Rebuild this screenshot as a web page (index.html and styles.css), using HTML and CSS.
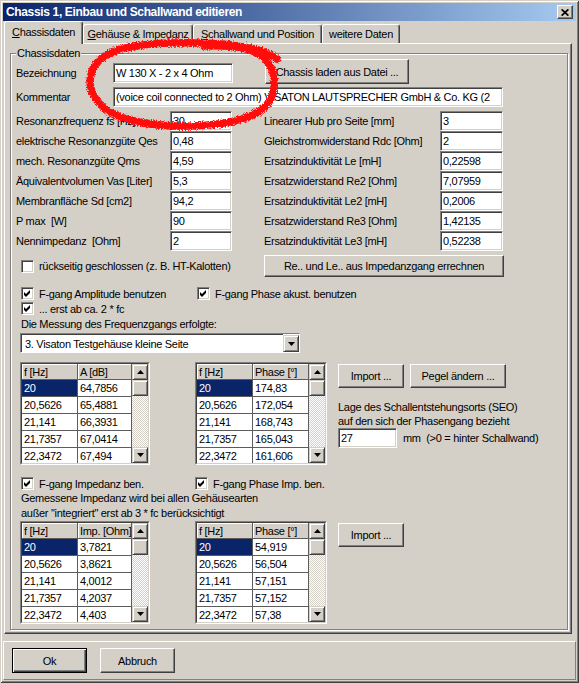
FILE: index.html
```html
<!DOCTYPE html>
<html lang="de">
<head>
<meta charset="utf-8">
<title>Chassis 1, Einbau und Schallwand editieren</title>
<link rel="stylesheet" href="styles.css">
</head>
<body>
<div class="window">
  <div class="titlebar">
    <span class="title">Chassis 1, Einbau und Schallwand editieren</span>
    <div class="close"><svg width="8" height="7" viewBox="0 0 8 7"><path d="M0.6 0.4 L7.4 6.6 M7.4 0.4 L0.6 6.6" stroke="#000" stroke-width="1.8" fill="none"/></svg></div>
  </div>
  <div class="tabs">
    <div class="tab tab-1 active"><u>C</u>hassisdaten</div>
    <div class="tab tab-2"><u>G</u>ehäuse &amp; Impedanz</div>
    <div class="tab tab-3"><u>S</u>challwand und Position</div>
    <div class="tab tab-4">weitere Daten</div>
  </div>
  <div class="page">
    <div class="group">
      <span class="legend">Chassisdaten</span>

      <div class="row row-name">
        <span class="lbl-w">Bezeichnung</span>
        <div class="edit edit-name">W 130 X - 2 x 4 Ohm</div>
        <div class="btn btn-load">Chassis laden aus Datei ...</div>
      </div>
      <div class="row row-comment">
        <span class="lbl-w">Kommentar</span>
        <div class="edit edit-comment">(voice coil connected to 2 Ohm) VISATON LAUTSPRECHER GmbH &amp; Co. KG (2</div>
      </div>

      <div class="params">
        <span>Resonanzfrequenz fs [Hz]</span><div class="edit">30</div><span class="lbl-r">Linearer Hub pro Seite [mm]</span><div class="edit">3</div>
        <span>elektrische Resonanzgüte Qes</span><div class="edit">0,48</div><span class="lbl-r">Gleichstromwiderstand Rdc [Ohm]</span><div class="edit">2</div>
        <span>mech. Resonanzgüte Qms</span><div class="edit">4,59</div><span class="lbl-r">Ersatzinduktivität Le [mH]</span><div class="edit">0,22598</div>
        <span>Äquivalentvolumen Vas [Liter]</span><div class="edit">5,3</div><span class="lbl-r">Ersatzwiderstand Re2 [Ohm]</span><div class="edit">7,07959</div>
        <span>Membranfläche Sd [cm2]</span><div class="edit">94,2</div><span class="lbl-r">Ersatzinduktivität Le2 [mH]</span><div class="edit">0,2006</div>
        <span>P max &nbsp;[W]</span><div class="edit">90</div><span class="lbl-r">Ersatzwiderstand Re3 [Ohm]</span><div class="edit">1,42135</div>
        <span>Nennimpedanz &nbsp;[Ohm]</span><div class="edit">2</div><span class="lbl-r">Ersatzinduktivität Le3 [mH]</span><div class="edit">0,52238</div>
      </div>

      <div class="row row-back">
        <div class="check-item check-back"><span class="chk"></span><span>rückseitig geschlossen (z. B. HT-Kalotten)</span></div>
        <div class="btn btn-calc">Re.. und Le.. aus Impedanzgang errechnen</div>
      </div>

      <div class="row row-chk row-fgang">
        <div class="check-item check-a"><span class="chk"><svg width="7" height="7" viewBox="0 0 7 7"><path d="M0 2 L2 4 L6 0 L6 3 L2 7 L0 5 Z" fill="#000"/></svg></span><span>F-gang Amplitude benutzen</span></div>
        <div class="check-item"><span class="chk"><svg width="7" height="7" viewBox="0 0 7 7"><path d="M0 2 L2 4 L6 0 L6 3 L2 7 L0 5 Z" fill="#000"/></svg></span><span>F-gang Phase akust. benutzen</span></div>
      </div>
      <div class="row row-chk">
        <div class="check-item"><span class="chk"><svg width="7" height="7" viewBox="0 0 7 7"><path d="M0 2 L2 4 L6 0 L6 3 L2 7 L0 5 Z" fill="#000"/></svg></span><span>... erst ab ca. 2 * fc</span></div>
      </div>
      <div class="note note-mess">Die Messung des Frequenzgangs erfolgte:</div>
      <div class="combo">
        <span class="combo-text">3. Visaton Testgehäuse kleine Seite</span>
        <span class="combo-btn"><svg width="7" height="4" viewBox="0 0 7 4"><path d="M0 0 H7 L3.5 4 Z" fill="#000"/></svg></span>
      </div>

      <div class="tables">
        <div class="grid">
          <div class="grid-in">
            <div class="cells">
              <span class="hd">f [Hz]</span><span class="hd">A [dB]</span>
              <span class="sel">20</span><span>64,7856</span>
              <span>20,5626</span><span>65,4881</span>
              <span>21,141</span><span>66,3931</span>
              <span>21,7357</span><span>67,0414</span>
              <span>22,3472</span><span>67,494</span>
            </div>
            <div class="vscroll">
              <span class="sb-btn"><svg width="7" height="4" viewBox="0 0 7 4"><path d="M0 4 H7 L3.5 0 Z" fill="#000"/></svg></span>
              <span class="sb-thumb"></span>
              <span class="sb-track"></span>
              <span class="sb-btn"><svg width="7" height="4" viewBox="0 0 7 4"><path d="M0 0 H7 L3.5 4 Z" fill="#000"/></svg></span>
            </div>
          </div>
        </div>
        <div class="grid grid-b">
          <div class="grid-in">
            <div class="cells cells-b">
              <span class="hd">f [Hz]</span><span class="hd">Phase [°]</span>
              <span class="sel">20</span><span>174,83</span>
              <span>20,5626</span><span>172,054</span>
              <span>21,141</span><span>168,743</span>
              <span>21,7357</span><span>165,043</span>
              <span>22,3472</span><span>161,606</span>
            </div>
            <div class="vscroll">
              <span class="sb-btn"><svg width="7" height="4" viewBox="0 0 7 4"><path d="M0 4 H7 L3.5 0 Z" fill="#000"/></svg></span>
              <span class="sb-thumb"></span>
              <span class="sb-track"></span>
              <span class="sb-btn"><svg width="7" height="4" viewBox="0 0 7 4"><path d="M0 0 H7 L3.5 4 Z" fill="#000"/></svg></span>
            </div>
          </div>
        </div>
        <div class="side">
          <div class="btnrow">
            <div class="btn btn-import">Import ...</div>
            <div class="btn btn-pegel">Pegel ändern ...</div>
          </div>
          <p class="seo">Lage des Schallentstehungsorts (SEO)<br>auf den sich der Phasengang bezieht</p>
          <div class="seo-row">
            <div class="edit edit-seo">27</div>
            <span>mm &nbsp;(&gt;0 = hinter Schallwand)</span>
          </div>
        </div>
      </div>

      <div class="row row-chk row-imp">
        <div class="check-item check-i"><span class="chk"><svg width="7" height="7" viewBox="0 0 7 7"><path d="M0 2 L2 4 L6 0 L6 3 L2 7 L0 5 Z" fill="#000"/></svg></span><span>F-gang Impedanz ben.</span></div>
        <div class="check-item"><span class="chk"><svg width="7" height="7" viewBox="0 0 7 7"><path d="M0 2 L2 4 L6 0 L6 3 L2 7 L0 5 Z" fill="#000"/></svg></span><span>F-gang Phase Imp. ben.</span></div>
      </div>
      <p class="note note-imp">Gemessene Impedanz wird bei allen Gehäusearten<br>außer "integriert" erst ab 3 * fc berücksichtigt</p>

      <div class="tables tables-imp">
        <div class="grid">
          <div class="grid-in">
            <div class="cells">
              <span class="hd">f [Hz]</span><span class="hd">Imp. [Ohm]</span>
              <span class="sel">20</span><span>3,7821</span>
              <span>20,5626</span><span>3,8621</span>
              <span>21,141</span><span>4,0012</span>
              <span>21,7357</span><span>4,2037</span>
              <span>22,3472</span><span>4,403</span>
            </div>
            <div class="vscroll">
              <span class="sb-btn"><svg width="7" height="4" viewBox="0 0 7 4"><path d="M0 4 H7 L3.5 0 Z" fill="#000"/></svg></span>
              <span class="sb-thumb"></span>
              <span class="sb-track"></span>
              <span class="sb-btn"><svg width="7" height="4" viewBox="0 0 7 4"><path d="M0 0 H7 L3.5 4 Z" fill="#000"/></svg></span>
            </div>
          </div>
        </div>
        <div class="grid grid-b">
          <div class="grid-in">
            <div class="cells cells-b">
              <span class="hd">f [Hz]</span><span class="hd">Phase [°]</span>
              <span class="sel">20</span><span>54,919</span>
              <span>20,5626</span><span>56,504</span>
              <span>21,141</span><span>57,151</span>
              <span>21,7357</span><span>57,152</span>
              <span>22,3472</span><span>57,38</span>
            </div>
            <div class="vscroll">
              <span class="sb-btn"><svg width="7" height="4" viewBox="0 0 7 4"><path d="M0 4 H7 L3.5 0 Z" fill="#000"/></svg></span>
              <span class="sb-thumb"></span>
              <span class="sb-track"></span>
              <span class="sb-btn"><svg width="7" height="4" viewBox="0 0 7 4"><path d="M0 0 H7 L3.5 4 Z" fill="#000"/></svg></span>
            </div>
          </div>
        </div>
        <div class="side">
          <div class="btnrow">
            <div class="btn btn-import">Import ...</div>
          </div>
        </div>
      </div>
    </div>
  </div>
  <div class="footer">
    <div class="btn btn-foot btn-default">Ok</div>
    <div class="btn btn-foot">Abbruch</div>
  </div>

  <svg class="scribble" width="579" height="683" viewBox="0 0 579 683">
    <defs>
      <filter id="spray" x="-5%" y="-5%" width="110%" height="110%">
        <feTurbulence type="fractalNoise" baseFrequency="0.8" numOctaves="2" seed="3" result="n"/>
        <feDisplacementMap in="SourceGraphic" in2="n" scale="5" xChannelSelector="R" yChannelSelector="G"/>
      </filter>
    </defs>
    <path d="M277 59 C262 47 222 42 172 43 C126 44 99 52 92 71 C85 91 98 113 134 121 C174 130 234 127 258 112 C279 99 279 71 263 57 C251 47 226 45 204 46" fill="none" stroke="#ff0a0a" stroke-width="7.5" stroke-linecap="round" filter="url(#spray)"/>
  </svg>
</div>
</body>
</html>
```
FILE: styles.css
```css
* { box-sizing: border-box; }
html, body { margin: 0; padding: 0; }
body {
  font-family: "Liberation Sans", Arial, sans-serif;
  font-size: 11px;
  letter-spacing: -0.3px;
  color: #000;
  background: #d4d0c8;
}
p { margin: 0; }

.window {
  position: relative;
  width: 579px;
  height: 683px;
  padding: 3px;
  background: #d4d0c8;
  display: flex;
  flex-direction: column;
  box-shadow: inset 1px 1px 0 #d4d0c8, inset -1px -1px 0 #404040, inset 2px 2px 0 #fff, inset -2px -2px 0 #808080;
}

/* title bar */
.titlebar {
  height: 18px;
  flex: none;
  display: flex;
  align-items: center;
  justify-content: space-between;
  padding: 0 3px 0 3px;
  background: linear-gradient(to right, #0a246a, #a6caf0);
  color: #fff;
}
.title { font-weight: bold; font-size: 12px; letter-spacing: -0.35px; }
.close {
  width: 16px;
  height: 14px;
  background: #d4d0c8;
  border: 1px solid;
  border-color: #fff #404040 #404040 #fff;
  box-shadow: inset -1px -1px 0 #808080;
  display: flex;
  align-items: center;
  justify-content: center;
}

/* tabs */
.tabs {
  height: 22px;
  flex: none;
  display: flex;
  align-items: flex-end;
  padding-left: 1px;
}
.tab {
  height: 19px;
  border-top: 1px solid #fff;
  border-left: 1px solid #fff;
  border-right: 1px solid #404040;
  box-shadow: inset -1px 0 0 #808080;
  border-radius: 3px 3px 0 0;
  display: flex;
  align-items: center;
  justify-content: center;
  white-space: nowrap;
}
.tab.active {
  height: 23px;
  margin-bottom: -1px;
  position: relative;
  z-index: 1;
  background: #d4d0c8;
  padding-bottom: 2px;
}
.tab-1 { width: 79px; }
.tab-2 { width: 110px; }
.tab-3 { width: 129px; }
.tab-4 { width: 78px; }

/* page */
.page {
  height: 591px;
  width: 568px;
  margin-left: 1px;
  flex: none;
  border-top: 1px solid #fff;
  border-left: 1px solid #fff;
  border-right: 1px solid #404040;
  border-bottom: 1px solid #404040;
  box-shadow: inset -1px -1px 0 #808080;
}
.group {
  position: relative;
  margin: 9px 0 0 5px;
  width: 558px;
  height: 577px;
  padding-left: 5px;
  border: 1px solid #808080;
  box-shadow: inset 1px 1px 0 #fff, 1px 1px 0 #fff;
}
.legend {
  position: absolute;
  top: -7px;
  left: 5px;
  padding: 0 1px;
  line-height: 13px;
  background: #d4d0c8;
}

/* controls */
.edit {
  height: 20px;
  background: #fff;
  border: 1px solid;
  border-color: #808080 #fff #fff #808080;
  box-shadow: inset 1px 1px 0 #404040, inset -1px -1px 0 #d4d0c8;
  padding-left: 2px;
  display: flex;
  align-items: center;
  white-space: nowrap;
  overflow: hidden;
}
.btn {
  background: #d4d0c8;
  border: 1px solid;
  border-color: #fff #404040 #404040 #fff;
  box-shadow: inset -1px -1px 0 #808080;
  display: flex;
  align-items: center;
  justify-content: center;
  white-space: nowrap;
}
.btn-default {
  border: 1px solid #000;
  box-shadow: inset 1px 1px 0 #fff, inset -1px -1px 0 #404040, inset -2px -2px 0 #808080;
}
.chk {
  width: 13px;
  height: 13px;
  flex: none;
  background: #fff;
  border: 1px solid;
  border-color: #808080 #fff #fff #808080;
  box-shadow: inset 1px 1px 0 #404040, inset -1px -1px 0 #d4d0c8;
  display: flex;
  align-items: center;
  justify-content: center;
}
.check-item {
  display: flex;
  align-items: center;
  gap: 5px;
  white-space: nowrap;
}

/* rows */
.row { display: flex; align-items: center; }
.lbl-w { width: 97px; flex: none; }
.row-name { margin-top: 9px; height: 20px; align-items: flex-start; }
.row-name .lbl-w { line-height: 20px; }
.edit-name { width: 120px; }
.btn-load { width: 144px; height: 25px; margin: -4px 0 0 32px; }
.row-comment { margin-top: 4px; height: 20px; }
.edit-comment { width: 390px; }

.params {
  margin-top: 4px;
  display: grid;
  grid-template-columns: 154px 62px 208px 63px;
  grid-auto-rows: 20px;
  align-items: center;
  white-space: nowrap;
}
.lbl-r { padding-left: 32px; }

.row-back { margin-top: 4px; height: 22px; }
.check-back { width: 248px; padding-left: 5px; }
.btn-calc { width: 240px; height: 22px; }

.row-chk { height: 15px; padding-left: 5px; }
.row-fgang { margin-top: 9px; }
.check-a { width: 176px; }
.note { margin-left: 5px; white-space: nowrap; }
.note-mess { margin-top: 1px; height: 15px; line-height: 15px; }

.combo {
  margin: 1px 0 0 4px;
  width: 280px;
  height: 20px;
  background: #fff;
  border: 1px solid;
  border-color: #808080 #fff #fff #808080;
  display: flex;
}
.combo-text {
  flex: 1;
  border-top: 1px solid #404040;
  border-left: 1px solid #404040;
  padding-left: 3px;
  display: flex;
  align-items: center;
}
.combo-btn {
  width: 16px;
  height: 17px;
  margin-top: 1px;
  background: #d4d0c8;
  border: 1px solid;
  border-color: #d4d0c8 #404040 #404040 #d4d0c8;
  box-shadow: inset 1px 1px 0 #fff, inset -1px -1px 0 #808080;
  display: flex;
  align-items: center;
  justify-content: center;
}

/* tables */
.tables {
  margin: 9px 0 0 4px;
  height: 103px;
  display: flex;
  align-items: flex-start;
}
.tables-imp { margin-top: 0; }
.grid {
  width: 130px;
  height: 103px;
  flex: none;
  border: 1px solid;
  border-color: #808080 #fff #fff #808080;
}
.grid-b { width: 132px; margin-left: 45px; }
.grid-in {
  height: 100%;
  display: flex;
  border: 1px solid;
  border-color: #404040 #d4d0c8 #d4d0c8 #404040;
  background: #fff;
}
.cells {
  flex: 1;
  overflow: hidden;
  display: grid;
  grid-template-columns: 56px 54px;
  grid-template-rows: 16px repeat(5, 17px);
}
.cells-b { grid-template-columns: 56px 56px; }
.cells span {
  border-right: 1px solid #5c5c5c;
  border-bottom: 1px solid #5c5c5c;
  padding-left: 2px;
  display: flex;
  align-items: center;
  white-space: nowrap;
  overflow: hidden;
  background: #fff;
}
.cells span.hd {
  background: #d4d0c8;
  box-shadow: inset 1px 1px 0 #fff;
}
.cells span.sel { background: #0a246a; color: #fff; }
.vscroll {
  width: 16px;
  flex: none;
  display: flex;
  flex-direction: column;
}
.sb-btn, .sb-thumb {
  height: 16px;
  flex: none;
  background: #d4d0c8;
  border: 1px solid;
  border-color: #d4d0c8 #404040 #404040 #d4d0c8;
  box-shadow: inset 1px 1px 0 #fff, inset -1px -1px 0 #808080;
  display: flex;
  align-items: center;
  justify-content: center;
}
.sb-track {
  flex: 1;
  background: repeating-conic-gradient(#fff 0 25%, #d4d0c8 0 50%) 0 0 / 2px 2px;
}

.side { margin-left: 11px; }
.btnrow { margin-top: 2px; display: flex; gap: 6px; }
.btn-import { width: 66px; height: 24px; }
.btn-pegel { width: 96px; height: 24px; }
.seo { margin-top: 12px; line-height: 14px; white-space: nowrap; }
.seo-row { display: flex; align-items: center; gap: 6px; white-space: nowrap; }
.edit-seo { width: 59px; }

.row-imp { margin-top: 11px; }
.check-i { width: 174px; }
.note-imp { line-height: 15px; }

/* footer */
.footer {
  margin-top: 7px;
  flex: 1;
  border: 1px solid;
  border-color: #fff #808080 #808080 #fff;
  display: flex;
  align-items: flex-start;
  gap: 13px;
  padding: 6px 0 0 8px;
}
.btn-foot { width: 75px; height: 25px; }

.scribble {
  position: absolute;
  top: 0;
  left: 0;
  pointer-events: none;
}
```
